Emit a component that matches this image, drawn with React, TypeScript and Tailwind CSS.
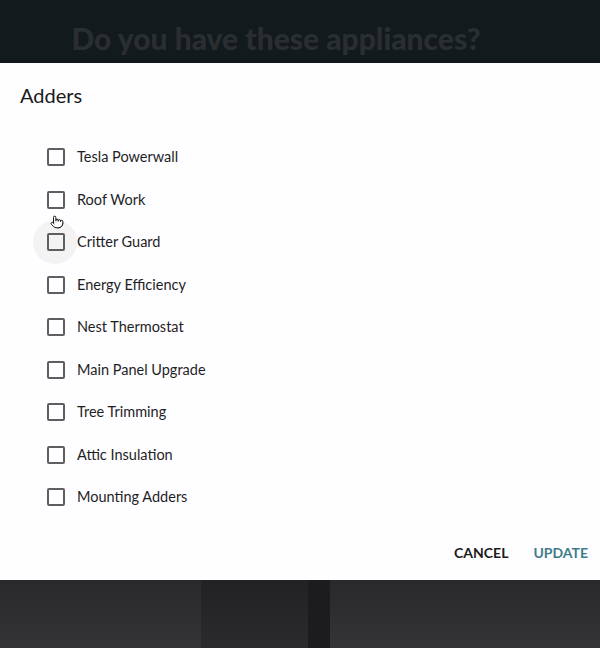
import { Pointer } from 'lucide-react'

// adders shown in the dialog, in order
const ADDERS = [
  'Tesla Powerwall',
  'Roof Work',
  'Critter Guard',
  'Energy Efficiency',
  'Nest Thermostat',
  'Main Panel Upgrade',
  'Tree Trimming',
  'Attic Insulation',
  'Mounting Adders',
]

export default function App() {
  return (
    <main
      className="flex h-[648px] w-[600px] flex-col overflow-hidden bg-[#2e2e30]"
      style={{ fontFamily: 'Lato, "Open Sans", sans-serif' }}
    >
      {/* dimmed page header behind the dialog */}
      <header className="flex h-[63px] items-end justify-center bg-[#121a1e] pb-[10px] pr-[48px]">
        <h1 className="text-[30px] font-black leading-none text-[#2b2e31]">
          Do you have these appliances?
        </h1>
      </header>

      <section className="flex h-[517px] flex-col bg-[#fefdff] shadow-[0_2px_6px_rgba(0,0,0,0.4)]">
        <h2 className="pl-[20px] pt-[18px] text-[20px] leading-[28px] text-[#1a1a1a]">
          Adders
        </h2>

        <ul className="mt-[27px] flex flex-col pl-[47px]">
          {ADDERS.map((a, i) => (
            <Row key={a} label={a} hover={i === 2} />
          ))}
        </ul>

        <div className="mt-auto flex items-center justify-end gap-[25px] pb-[17px] pr-[12px]">
          <button className="text-[14px] font-bold tracking-[0px] text-[#1b1b1b]">
            CANCEL
          </button>
          <button className="text-[14px] font-bold tracking-[0px] text-[#3f7c87]">
            UPDATE
          </button>
        </div>
      </section>

      {/* dark page content below */}
      <div className="flex flex-1">
        <div className="w-[201px] bg-gradient-to-b from-[#29292b] to-[#343436]" />
        <div className="w-[107px] bg-gradient-to-b from-[#222224] to-[#2b2b2d]" />
        <div className="w-[22px] bg-[#1c1c1e]" />
        <div className="flex-1 bg-gradient-to-b from-[#29292b] to-[#343436]" />
      </div>
    </main>
  )
}

function Row({ label, hover }: { label: string; hover?: boolean }) {
  return (
    <li className="relative flex h-[42.5px] items-center gap-[12px]">
      {hover && (
        <>
          <span className="absolute left-[-14px] top-[-1px] h-[44px] w-[44px] rounded-full bg-[#f3f3f3]" />
          <Pointer
            size={14}
            strokeWidth={1.6}
            className="absolute left-[3px] top-[-6px] z-10 fill-white text-black"
          />
        </>
      )}
      <span className="relative h-[18px] w-[18px] rounded-[2px] border-2 border-[#5f5f5f] bg-transparent" />
      <span className="text-[14.5px] text-[#1f1f1f]">{label}</span>
    </li>
  )
}
